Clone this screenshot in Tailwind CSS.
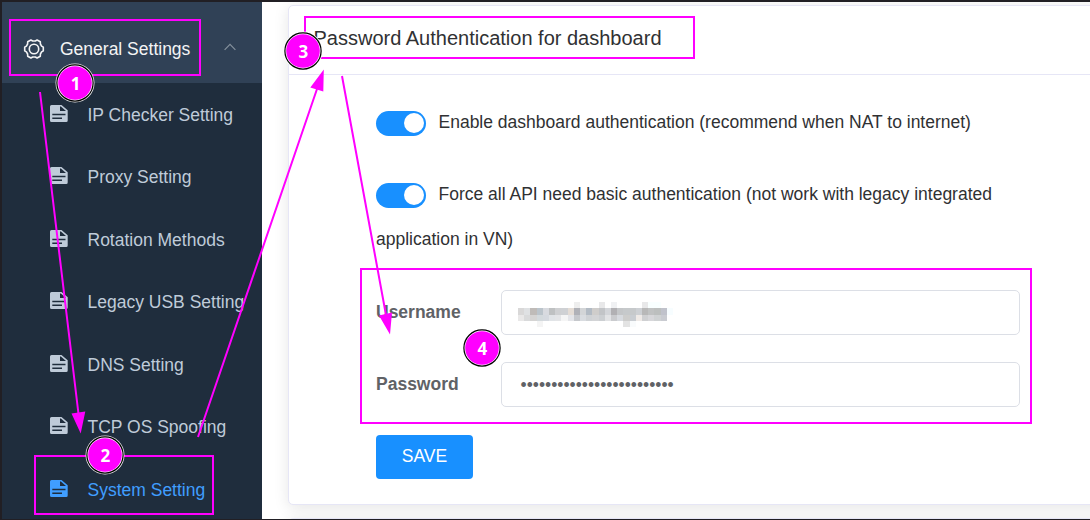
<!DOCTYPE html>
<html lang="en">
<head>
<meta charset="utf-8">
<title>System Setting</title>
<script src="https://cdn.jsdelivr.net/npm/@tailwindcss/browser@4"></script>
</head>
<body class="relative w-[1090px] h-[520px] overflow-hidden bg-white font-['Liberation_Sans',Arial,sans-serif]">
<svg class="hidden">
  <symbol id="doc" viewBox="0 0 18 17">
    <path fill="currentColor" fill-rule="evenodd" d="M1.5 0H11.5L17.700 5.2V15.5Q17.700 17 16.2 17H1.5Q0 17 0 15.500V1.500Q0 0 1.500 0ZM10 1.400V6H16L10.900 1.400ZM2.300 8.800V10.200H15.500V8.800ZM2.300 12.500V13.900H12V12.500Z"/>
  </symbol>
</svg>
<div class="flex h-[520px] border-t-2 border-l-2 border-b border-[#211f24]">
  <aside class="w-[260px] shrink-0 bg-[#1f2d3d] text-[17.5px] text-[#bfcbd9] whitespace-nowrap">
    <div class="flex items-center h-[81px] pt-[13px] pl-[21px] bg-[#304156] text-[#f4f4f5]">
      <svg class="size-[22px] mb-px" viewBox="0 0 22 22" fill="none" stroke="currentColor" stroke-width="1.6" stroke-linejoin="round">
        <path d="M20.300 9.200V12.800L18.600 13.900L17.400 16L17.300 18.200L14.100 20L12.300 19H9.700L7.900 20L4.700 18.200L4.600 16L3.400 13.900L1.700 12.800V9.200L3.400 8.100L4.600 6L4.700 3.800L7.900 2L9.700 3H12.300L14.100 2L17.300 3.800L17.400 6L18.600 8.100Z"/>
        <circle cx="11" cy="11" r="4.700"/>
      </svg>
      <span class="ml-[15px]">General Settings</span>
      <svg class="ml-[34px] mb-[5px] w-3 h-2" viewBox="0 0 12 8" fill="none" stroke="#84909c" stroke-width="1.200"><path d="M.600 6.800L6 1.300L11.400 6.800"/></svg>
    </div>
    <nav>
      <a class="flex items-center h-[62.500px] pl-12 gap-[19.5px]"><svg class="w-[18px] h-[17px] mb-0.5"><use href="#doc"/></svg><span class="pt-px">IP Checker Setting</span></a>
      <a class="flex items-center h-[62.500px] pl-12 gap-[19.5px]"><svg class="w-[18px] h-[17px] mb-0.5"><use href="#doc"/></svg><span class="pt-px">Proxy Setting</span></a>
      <a class="flex items-center h-[62.500px] pl-12 gap-[19.5px]"><svg class="w-[18px] h-[17px] mb-0.5"><use href="#doc"/></svg><span class="pt-px">Rotation Methods</span></a>
      <a class="flex items-center h-[62.500px] pl-12 gap-[19.5px]"><svg class="w-[18px] h-[17px] mb-0.5"><use href="#doc"/></svg><span class="pt-px">Legacy USB Setting</span></a>
      <a class="flex items-center h-[62.500px] pl-12 gap-[19.5px]"><svg class="w-[18px] h-[17px] mb-0.5"><use href="#doc"/></svg><span class="pt-px">DNS Setting</span></a>
      <a class="flex items-center h-[62.500px] pl-12 gap-[19.5px]"><svg class="w-[18px] h-[17px] mb-0.5"><use href="#doc"/></svg><span class="pt-px">TCP OS Spoofing</span></a>
      <a class="flex items-center h-[62.500px] pl-12 gap-[19.5px] text-[#409eff]"><svg class="w-[18px] h-[17px] mb-0.5"><use href="#doc"/></svg><span class="pt-px">System Setting</span></a>
    </nav>
  </aside>
  <main class="flex-1 min-w-0 overflow-hidden pt-[3px] pl-[26px] text-[#303133]">
    <section class="w-[840px] h-[500px] rounded-[5px] border border-[#e6e6f6] bg-white shadow-[0_2.5px_15px_rgba(0,0,0,0.1)]">
      <h1 class="flex items-center h-[69px] pl-[24.5px] pb-[5px] border-b border-[#e6e6f6] text-[20px]">Password Authentication for dashboard</h1>
      <div class="pl-[87px] text-[17.5px]">
        <div class="flex items-center h-[45px] mt-[25px] gap-[12.5px]">
          <span class="flex justify-end items-center w-[50px] h-[25px] mt-px pr-0.5 rounded-full bg-[#1890ff]"><i class="size-5 rounded-full bg-white"></i></span>
          <span>Enable dashboard authentication (recommend when NAT to internet)</span>
        </div>
        <div class="flex items-center h-[45px] mt-[27px] gap-[12.5px]">
          <span class="flex justify-end items-center w-[50px] h-[25px] mt-px pr-0.5 rounded-full bg-[#1890ff]"><i class="size-5 rounded-full bg-white"></i></span>
          <span>Force all API need basic authentication (not work with legacy integrated</span>
        </div>
        <p class="leading-[45px]">application in VN)</p>
        <div class="flex h-[45px] mt-[28px]">
          <label class="w-[125px] leading-[45px] font-bold text-[#606266]">Username</label>
          <div class="w-[519px] rounded-[5px] border border-[#dcdfe6] pl-[16px] pt-[11px]"><svg id="masked" class="w-[160px] h-[26px]" shape-rendering="crispEdges" aria-label="hidden user name"></svg></div>
        </div>
        <div class="flex h-[45px] mt-[27px]">
          <label class="w-[125px] leading-[45px] font-bold text-[#606266]">Password</label>
          <div class="flex items-center w-[519px] rounded-[5px] border border-[#dcdfe6] pl-[18.5px] pt-[3px]">
            <span class="text-[#606266] text-[17.5px] leading-none">•••••••••••••••••••••••••</span>
          </div>
        </div>
        <button class="block w-[97px] h-[44px] mt-[28px] pb-px rounded-[4px] bg-[#1890ff] text-white text-[17.5px]">SAVE</button>
      </div>
    </section>
    <div class="w-[840px] h-5 mt-[13px] rounded-[5px] border border-[#e6e6f6] bg-white shadow-[0_2.5px_15px_rgba(0,0,0,0.1)]"></div>
  </main>
</div>
<!-- Numbered walkthrough annotations -->
<svg class="absolute inset-0 w-[1090px] h-[520px]" viewBox="0 0 1090 520">
  <g fill="none" stroke="#ff00ff" stroke-width="2">
    <rect x="10" y="20" width="190" height="55"/>
    <rect x="35" y="456" width="178" height="58"/>
    <rect x="305" y="17" width="389" height="41"/>
    <rect x="361" y="269" width="670" height="154"/>
    <path d="M40 92L78.500 414M198 437L317 89M342 76L386 315"/>
  </g>
  <path fill="#ff00ff" d="M71.500 413.500L85.300 411.500L80.700 433.500ZM310.300 87.500L323.300 91.500L323.800 69.500ZM379 315.500L392 312.500L390 334.500Z"/>
  <g fill="#eee"><circle cx="75" cy="83" r="19.500"/><circle cx="105" cy="455" r="19.500"/><circle cx="303" cy="51" r="19.500" fill="#fff"/><circle cx="482" cy="348" r="19.500" fill="#fff"/></g>
  <g fill="#fff" stroke="#000" stroke-width="1.200"><circle cx="75" cy="83" r="18.100"/><circle cx="105" cy="455" r="18.100"/><circle cx="303" cy="51" r="18.100"/><circle cx="482" cy="348" r="18.100"/></g>
  <g fill="#ff00ff"><circle cx="75" cy="83" r="16.800"/><circle cx="105" cy="455" r="16.800"/><circle cx="303" cy="51" r="16.800"/><circle cx="482" cy="348" r="16.800"/></g>
  <g class="font-['Open_Sans',sans-serif] font-bold text-[17px]" fill="#fff" text-anchor="middle">
    <text x="75.500" y="90">1</text><text x="105.300" y="462">2</text><text x="303.300" y="58">3</text><text x="482.300" y="355">4</text>
  </g>
</svg>
<script>
const rows = [
  "fff fff fff fff fff fff fff fff fff eee fff fff fff e8e8e9 fff f0f1f3 fff fff fff fff e8e8e9 f9ffff f9ffff fff fff",
  "d9d8d8 dfe1e3 bfbbb8 bbc4cb d8dadf bfc1c2 cfd0d2 cfd1d4 e4dcd5 b0b1b7 d3d5d7 b3bbc4 cfcdcb c2c4c7 d3d5d9 b1b0b3 c4c6c8 c6c9cb c6c9cb cdd0d4 b8b8b8 c0c2c2 bcbfbe c0c2cb f7fdff",
  "e9e8e8 d9dadb d5d4d3 d3d9dc d5d9df e1e4e7 e4e5e7 f5f5f5 e4e5e9 c6c8cc d9dce0 cfd2d5 d3d4d6 cccfd2 e2e3e5 cacbce d7dadf cdcdcc c9cdd2 efeae7 cfd0d2 d7d7da cfd2d3 c9cbd1 fff",
  "fff fff fff f4f4f4 fff fff fff fff fff fff fff fff fff fff fff fff fff e3e3e3 f9fbfc fff fff fff fff fff fff"
];
const ys = [0, 6, 13, 19, 25];
document.getElementById("masked").innerHTML = rows.map((r, j) => r.split(" ").map((c, i) => {
  const x = Math.round(i * 6.2), w = Math.round((i + 1) * 6.2) - x;
  return c === "fff" ? "" : `<rect x="${x}" y="${ys[j]}" width="${w}" height="${ys[j + 1] - ys[j]}" fill="#${c}"/>`;
}).join("")).join("");
</script>
</body>
</html>
